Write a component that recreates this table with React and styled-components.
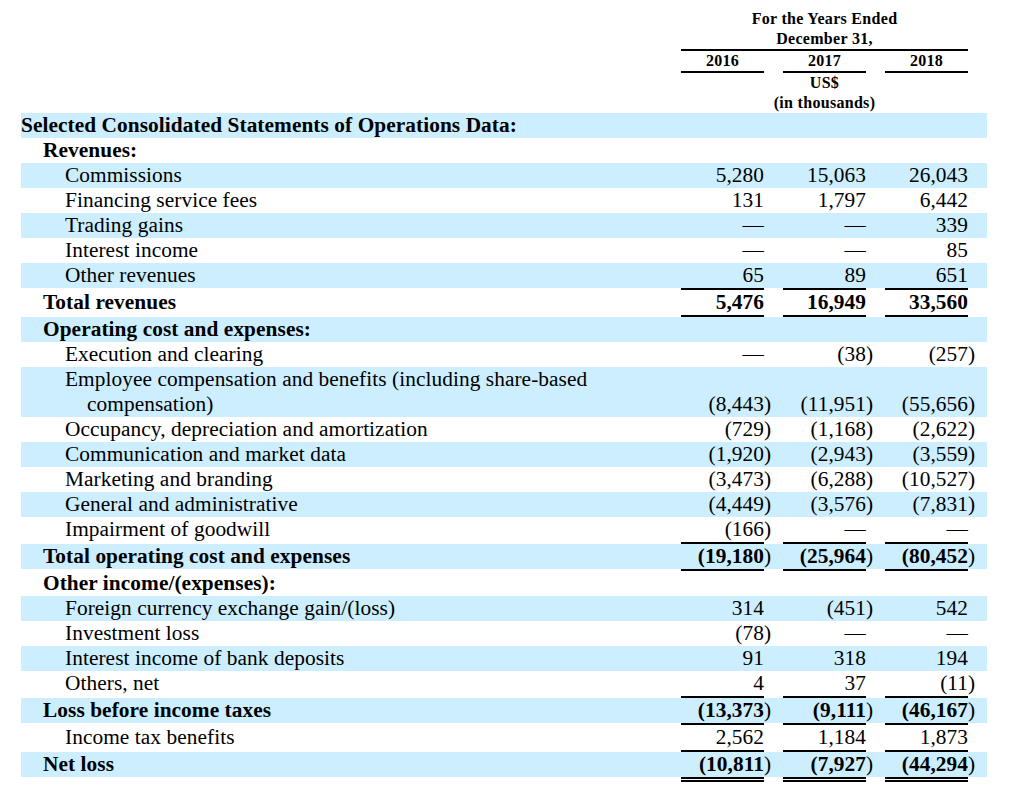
import React from "react";
import styled, { createGlobalStyle } from 'styled-components';

const GlobalStyle = createGlobalStyle`
body {
    margin: 0;
    background: #FFFFFF;
    color: #000000;
    font-family: "Liberation Serif", "Times New Roman", serif;
}`;

const COLUMNS = '660px 83px 19px 83px 19px 83px 19px';

const Page = styled.div`
padding: 9px 0 0 21px;
width: 966px;`;

const HeadRow = styled.div`
display: grid;
grid-template-columns: ${COLUMNS};
font-size: 16px;
font-weight: bold;
line-height: 20px;
letter-spacing: 0.3px;
text-align: center;`;

const HeadCell = styled.div`
grid-column: ${ props => props.span || 'auto' };
border-bottom: ${ props => props.rule ? '2px solid #000000' : 'none' };`;

const Row = styled.div`
display: grid;
grid-template-columns: ${COLUMNS};
align-items: end;
font-size: 16pt;
line-height: 25px;
letter-spacing: 0.07px;
background: ${ props => props.shaded ? '#CCEEFF' : 'transparent' };`;

const Label = styled.div`
padding-left: ${ props => props.level * 22 }px;
font-weight: ${ props => props.bold ? 'bold' : 'normal' };
white-space: nowrap;`;

const Wrapped = styled.span`
display: block;
padding-left: 22px;`;

const Num = styled.div`
text-align: right;
white-space: nowrap;
font-weight: ${ props => props.bold ? 'bold' : 'normal' };`;

const Paren = styled.div`
text-align: left;
font-weight: normal;`;

const RuleRow = styled.div`
display: grid;
grid-template-columns: ${COLUMNS};`;

const Line = styled.div`
grid-column: ${ props => props.col };
height: ${ props => props.double ? '1px' : '2px' };
background: ${ props => props.double ? 'transparent' : '#000000' };
border-top: ${ props => props.double ? '2px solid #000000' : 'none' };
border-bottom: ${ props => props.double ? '2px solid #000000' : 'none' };`;

const rows = [
    { label: 'Selected Consolidated Statements of Operations Data:', level: 0, bold: true },
    { label: 'Revenues:', level: 1, bold: true },
    { label: 'Commissions', level: 2, values: ['5,280', '15,063', '26,043'] },
    { label: 'Financing service fees', level: 2, values: ['131', '1,797', '6,442'] },
    { label: 'Trading gains', level: 2, values: ['—', '—', '339'] },
    { label: 'Interest income', level: 2, values: ['—', '—', '85'] },
    { label: 'Other revenues', level: 2, values: ['65', '89', '651'] },
    { rule: true },
    { label: 'Total revenues', level: 1, bold: true, values: ['5,476', '16,949', '33,560'] },
    { rule: true },
    { label: 'Operating cost and expenses:', level: 1, bold: true },
    { label: 'Execution and clearing', level: 2, values: ['—', '(38)', '(257)'] },
    { label: 'Employee compensation and benefits (including share-based', more: 'compensation)', level: 2, values: ['(8,443)', '(11,951)', '(55,656)'] },
    { label: 'Occupancy, depreciation and amortization', level: 2, values: ['(729)', '(1,168)', '(2,622)'] },
    { label: 'Communication and market data', level: 2, values: ['(1,920)', '(2,943)', '(3,559)'] },
    { label: 'Marketing and branding', level: 2, values: ['(3,473)', '(6,288)', '(10,527)'] },
    { label: 'General and administrative', level: 2, values: ['(4,449)', '(3,576)', '(7,831)'] },
    { label: 'Impairment of goodwill', level: 2, values: ['(166)', '—', '—'] },
    { rule: true },
    { label: 'Total operating cost and expenses', level: 1, bold: true, values: ['(19,180)', '(25,964)', '(80,452)'] },
    { rule: true },
    { label: 'Other income/(expenses):', level: 1, bold: true },
    { label: 'Foreign currency exchange gain/(loss)', level: 2, values: ['314', '(451)', '542'] },
    { label: 'Investment loss', level: 2, values: ['(78)', '—', '—'] },
    { label: 'Interest income of bank deposits', level: 2, values: ['91', '318', '194'] },
    { label: 'Others, net', level: 2, values: ['4', '37', '(11)'] },
    { rule: true },
    { label: 'Loss before income taxes', level: 1, bold: true, values: ['(13,373)', '(9,111)', '(46,167)'] },
    { rule: true },
    { label: 'Income tax benefits', level: 2, values: ['2,562', '1,184', '1,873'] },
    { rule: true },
    { label: 'Net loss', level: 1, bold: true, values: ['(10,811)', '(7,927)', '(44,294)'] },
    { rule: true, double: true },
];

const Rule = ({ double }) => (
    <RuleRow>
        <Line col={2} double={double} />
        <Line col={4} double={double} />
        <Line col={6} double={double} />
    </RuleRow>
);

const App = () => {
    let shade = true;
    return (
        <React.Fragment>
            <GlobalStyle />
            <Page>
                <HeadRow>
                    <div></div>
                    <HeadCell span="2 / 7">For the Years Ended</HeadCell>
                </HeadRow>
                <HeadRow>
                    <div></div>
                    <HeadCell span="2 / 7" rule>December 31,</HeadCell>
                </HeadRow>
                <HeadRow>
                    <div></div>
                    <HeadCell rule>2016</HeadCell>
                    <div></div>
                    <HeadCell rule>2017</HeadCell>
                    <div></div>
                    <HeadCell rule>2018</HeadCell>
                </HeadRow>
                <HeadRow>
                    <div></div>
                    <HeadCell span="2 / 7">US$</HeadCell>
                </HeadRow>
                <HeadRow>
                    <div></div>
                    <HeadCell span="2 / 7">(in thousands)</HeadCell>
                </HeadRow>

                {rows.map((row, i) => {
                    if (row.rule) return <Rule key={i} double={row.double} />;
                    const shaded = shade;
                    shade = !shade;
                    return (
                        <Row key={i} shaded={shaded}>
                            <Label level={row.level} bold={row.bold}>
                                {row.label}
                                {row.more && <Wrapped>{row.more}</Wrapped>}
                            </Label>
                            {(row.values || ['', '', '']).map((v, j) => {
                                const neg = v.endsWith(')');
                                return (
                                    <React.Fragment key={j}>
                                        <Num bold={row.bold}>{neg ? v.slice(0, -1) : v}</Num>
                                        <Paren>{neg ? ')' : ''}</Paren>
                                    </React.Fragment>
                                );
                            })}
                        </Row>
                    );
                })}
            </Page>
        </React.Fragment>
    )
}

export default App;
